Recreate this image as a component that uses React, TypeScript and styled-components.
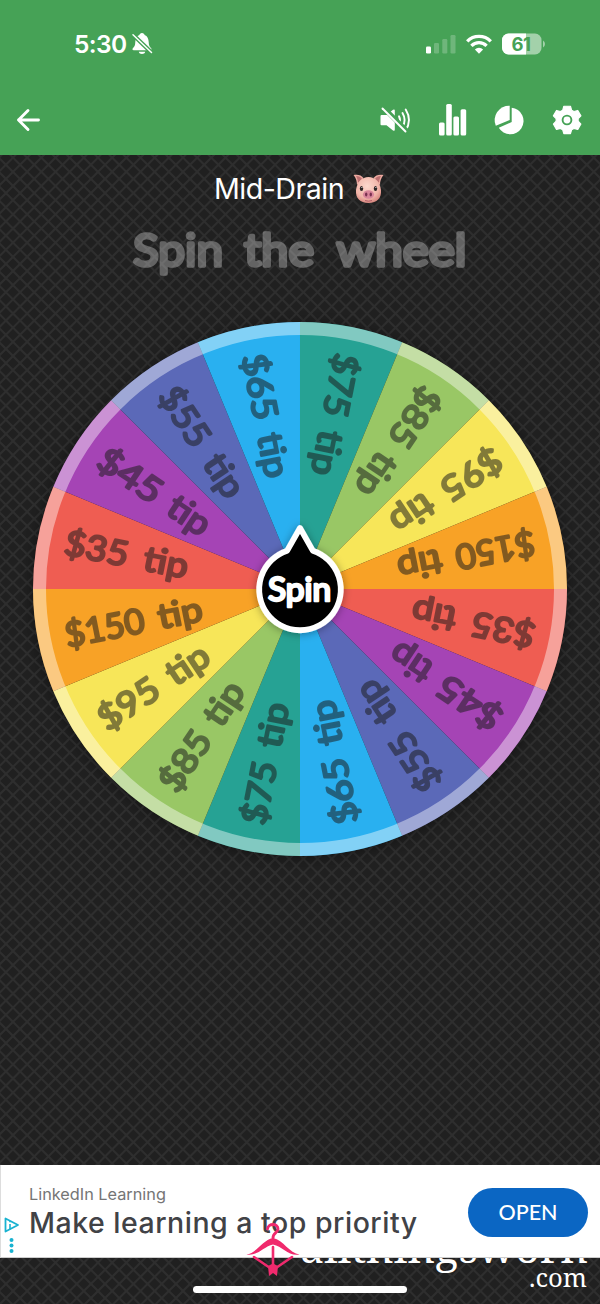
import React from "react";
import styled, { createGlobalStyle } from "styled-components";

const Global = createGlobalStyle`
  *{box-sizing:border-box}
  body{margin:0;background:#202020}
`;

const lattice = `url("data:image/svg+xml,%3Csvg xmlns='http://www.w3.org/2000/svg' width='85' height='85' viewBox='0 0 6 6'%3E%3Cpath d='M-1 0L6 7M-1 -1L7 7M0 -1L7 6M1 -1L7 5M2 -1L7 4M3 -1L7 3M4 -1L7 2M5 -1L7 1M-1 1L5 7M-1 2L4 7M-1 3L3 7M-1 4L2 7M-1 5L1 7M-1 1L1 -1M-1 2L2 -1M-1 3L3 -1M-1 4L4 -1M-1 5L5 -1M-1 6L6 -1M-1 7L7 -1M0 7L7 0M1 7L7 1M2 7L7 2M3 7L7 3M4 7L7 4M5 7L7 5' stroke='%232e2e2e' stroke-width='.14'/%3E%3C/svg%3E")`;

const Screen = styled.main`
  width: 600px;
  height: 1304px;
  display: flex;
  flex-direction: column;
  overflow: hidden;
  background: #202020 ${lattice} 12.5px 15.5px;
  background-size: 85px 85px;
  font-family: Inter, sans-serif;
`;
const Header = styled.header`
  height: 155px;
  flex: none;
  background: #46a256;
  color: #fff;
`;
const StatusBar = styled.div`
  height: 88px;
  padding: 0 55px 0 74px;
  display: flex;
  align-items: center;
  justify-content: space-between;
`;
const Cluster = styled.div<{ $gap: number }>`
  display: flex;
  align-items: center;
  gap: ${(p) => p.$gap}px;
`;
const Clock = styled.span`
  font-size: 24.5px;
  line-height: 30px;
  font-weight: 600;
  letter-spacing: -0.6px;
`;
const NavBar = styled.nav`
  height: 64px;
  padding: 0 18px 0 16px;
  display: flex;
  align-items: center;
  justify-content: space-between;
`;
const Glyph = styled.svg`
  display: block;
  flex: none;
  overflow: visible;
`;
const Game = styled.section`
  height: 1010px;
  flex: none;
  display: flex;
  flex-direction: column;
  align-items: center;
`;
const WheelName = styled.h1`
  margin: 16px 2px 0 0;
  height: 36px;
  display: flex;
  align-items: center;
  gap: 9px;
  color: #fff;
  font-size: 28.6px;
  line-height: 36px;
  font-weight: 400;
  letter-spacing: -0.5px;
`;
const Prompt = styled.svg`
  display: block;
  width: 600px;
  height: 74px;
  flex: none;
`;
const Wheel = styled.svg`
  display: block;
  width: 600px;
  height: 600px;
  margin-top: 7.5px;
  flex: none;
`;
const Ad = styled.aside`
  height: 93px;
  flex: none;
  background: #fff;
  border-left: 1px solid #ddd;
  border-bottom: 1px solid #ccc;
  padding: 0 12px 0 2px;
  display: flex;
  align-items: center;
`;
const AdMarks = styled.div`
  width: 26px;
  padding-top: 48px;
  align-self: flex-start;
`;
const AdCopy = styled.div`
  flex: 1;
  white-space: nowrap;
`;
const Sponsor = styled.div`
  font-size: 16.3px;
  line-height: 22px;
  color: #757575;
`;
const Headline = styled.div`
  margin-top: 1px;
  font-size: 28.5px;
  line-height: 34px;
  font-weight: 500;
  color: #414246;
  letter-spacing: 0.5px;
`;
const OpenButton = styled.button`
  width: 120px;
  height: 49px;
  border: 0;
  border-radius: 25px;
  background: #0b66c3;
  color: #fff;
  font: 500 21.5px/49px Lato, sans-serif;
  padding: 0;
  margin-top: 2px;
`;
const Footer = styled.footer`
  flex: 1;
  position: relative;
`;
const Watermark = styled.svg`
  position: absolute;
  left: 290px;
  top: 0;
  width: 310px;
  height: 46px;
  overflow: hidden;
`;
const HangerMark = styled.svg`
  position: absolute;
  left: 240px;
  top: -40px;
  width: 64px;
  height: 64px;
`;
const HomeIndicator = styled.div`
  width: 214px;
  height: 7px;
  border-radius: 4px;
  background: #fff;
  margin: 28px auto 0;
`;

const RED = "#ef5d52";
const PURPLE = "#a544b5";
const INDIGO = "#5b69b8";
const BLUE = "#29b0f0";
const TEAL = "#26a294";
const GREEN = "#99c765";
const YELLOW = "#f7e659";
const ORANGE = "#f8a226";

type Slice = { amount: string; color: string; amountEnd: number; tip: number; tipEnd: number };
const slices: Slice[] = [
  { amount: "$35", color: RED, amountEnd: -176, tip: -159, tipEnd: -115 },
  { amount: "$45", color: PURPLE, amountEnd: -170, tip: -155, tipEnd: -112 },
  { amount: "$55", color: INDIGO, amountEnd: -176, tip: -159, tipEnd: -115 },
  { amount: "$65", color: BLUE, amountEnd: -174, tip: -159, tipEnd: -115 },
  { amount: "$75", color: TEAL, amountEnd: -177, tip: -161, tipEnd: -117 },
  { amount: "$85", color: GREEN, amountEnd: -175, tip: -160, tipEnd: -116 },
  { amount: "$95", color: YELLOW, amountEnd: -174, tip: -158, tipEnd: -114 },
  { amount: "$150", color: ORANGE, amountEnd: -160, tip: -145, tipEnd: -101 },
];
const wheel = [...slices, ...slices];
const R = 267;
const x2 = -R * Math.cos(Math.PI / 8);
const y2 = -R * Math.sin(Math.PI / 8);

const Round = styled.text`
  font-family: Lato, sans-serif;
  font-weight: 400;
  stroke-linejoin: round;
  stroke-linecap: round;
`;

function Word({ x, y, width, children }: { x: number; y: number; width: number; children: string }) {
  return (
    <Round x={x} y={y} textLength={width} lengthAdjust="spacingAndGlyphs">{children}</Round>
  );
}

function Pig() {
  return (
    <Glyph width="31" height="30" viewBox="0 0 31 30">
      <defs>
        <radialGradient id="pig" cx=".45" cy=".35" r=".65">
          <stop offset="0" stopColor="#fcd9cd" />
          <stop offset=".7" stopColor="#f1b5a9" />
          <stop offset="1" stopColor="#d98a82" />
        </radialGradient>
      </defs>
      <path d="M.5 1c4-1 8 0 10 3L4 11C4 7 3 4 .5 1zM30.500 1c-4-1-8 0-10 3l6.500 7c0-4 1-7 3.500-10z" fill="#edaaa0" />
      <path d="M3 2c3 0 5 1 6 3L5 9C5 6 4 4 3 2zM28 2c-3 0-5 1-6 3l4 4c0-3 1-5 2-7z" fill="#ba6f70" />
      <path d="M15.500 3C22 3 27 8 28 16c.7 8-4 13-12.500 13S2.300 24 3 16C4 8 9 3 15.500 3z" fill="url(#pig)" />
      <ellipse cx="8.500" cy="14.500" rx="1.700" ry="2.600" fill="#2d2525" />
      <ellipse cx="22.500" cy="14.500" rx="1.700" ry="2.600" fill="#2d2525" />
      <circle cx="8.900" cy="13.500" r=".6" fill="#fff" />
      <circle cx="22.900" cy="13.500" r=".6" fill="#fff" />
      <ellipse cx="15.500" cy="20.500" rx="5.600" ry="4.300" fill="#d9859a" />
      <ellipse cx="13.200" cy="20.500" rx="1.200" ry="1.900" fill="#78304e" />
      <ellipse cx="17.800" cy="20.500" rx="1.200" ry="1.900" fill="#78304e" />
      <path d="M12 26.500q3.500 1.400 7 0" fill="none" stroke="#b45f68" />
    </Glyph>
  );
}

export default function App() {
  return (
    <Screen>
      <Global />
      <Header>
        <StatusBar>
          <Cluster $gap={5}>
            <Clock>5:30</Clock>
            <Glyph width="20" height="22" viewBox="0 0 20 22" fill="#fff">
              <path d="M10 0C8.500 0 7.600 1 7.400 2 4.500 3 3.500 6 3.300 9c-.1 3.500-.8 4.500-2.300 6-.8.8-.8 2.200.7 2.200h16.600c1.500 0 1.500-1.400.7-2.200-1.500-1.500-2.200-2.500-2.300-6C16.500 6 15.500 3 12.600 2 12.400 1 11.500 0 10 0z" />
              <path d="M6.800 18.800h6.400c-.4 3-6 3-6.400 0z" />
              <path d="M1 1.700l18.500 17.800" stroke="#46a256" strokeWidth="4.200" />
              <path d="M1 1.700l18.500 17.800" stroke="#fff" strokeWidth="1.500" strokeLinecap="round" />
            </Glyph>
          </Cluster>
          <Cluster $gap={10}>
            <Glyph width="30" height="20" viewBox="0 0 30 20" fill="#fff">
              <rect x="0" y="12.500" width="5" height="7" rx="1.300" />
              <g opacity=".22">
                <rect x="8" y="9" width="5" height="10.500" rx="1.300" />
                <rect x="16.300" y="5" width="5" height="14.500" rx="1.300" />
                <rect x="24.500" y="1" width="5" height="18.500" rx="1.300" />
              </g>
            </Glyph>
            <Glyph width="26" height="20" viewBox="0 0 26 20" fill="none" stroke="#fff" strokeWidth="3.300">
              <path d="M1.200 7.300a16.600 16.600 0 0 1 23.600 0M5.400 11.800a10.700 10.700 0 0 1 15.200 0" />
              <path d="M13 19.700l-4.100-4.200a5.800 5.800 0 0 1 8.200 0z" fill="#fff" stroke="none" />
            </Glyph>
            <Glyph width="43" height="22" viewBox="0 0 43 22">
              <clipPath id="battery"><rect width="39.500" height="21" y=".5" rx="6.500" /></clipPath>
              <g clipPath="url(#battery)">
                <rect width="40" height="22" fill="#a3d1aa" />
                <rect width="24" height="22" fill="#fff" />
              </g>
              <path d="M41 7.500q2 1 2 3.500t-2 3.500z" fill="#a3d1aa" />
              <text x="19" y="17.500" textAnchor="middle" fontFamily="Inter" fontWeight="700" fontSize="18.500" letterSpacing="-.5" fill="#46a256">61</text>
            </Glyph>
          </Cluster>
        </StatusBar>
        <NavBar>
          <Glyph width="24" height="24" viewBox="0 0 24 24" fill="none" stroke="#fff" strokeWidth="2.900" strokeLinecap="round" strokeLinejoin="round">
            <path d="M22.500 12H2.500M12 2.500L2.500 12l9.500 9.500" />
          </Glyph>
          <Cluster $gap={28}>
            <Glyph width="30" height="30" viewBox="0 0 30 30" fill="none" stroke="#fff" strokeLinecap="round">
              <path d="M1.500 10h5L13 4.800q1.800-1 1.800.8v19q0 2-1.800.8l-6.500-5.200h-5q-1 0-1-1v-8q0-1.200 1-1.200z" fill="#fff" stroke="none" />
              <path d="M19 11.300q2 3.700 0 7.400M22.500 8q4.200 7 0 14M25.700 4.500q6.500 10.500 0 21" strokeWidth="1.900" />
              <path d="M3.500 2.800l23 23" stroke="#46a256" strokeWidth="5" />
              <path d="M2.500 3.500l23 23" strokeWidth="1.900" />
            </Glyph>
            <Glyph width="28" height="32" viewBox="-1 0 28 32" fill="#fff">
              <rect x="0" y="18.500" width="5.600" height="13" rx="1.500" />
              <rect x="7.200" y="0" width="5.600" height="31.500" rx="1.500" />
              <rect x="14.400" y="12.500" width="5.600" height="19" rx="1.500" />
              <rect x="21.600" y="5.300" width="5.600" height="26.200" rx="1.500" />
            </Glyph>
            <Glyph width="30" height="30" viewBox="-.5 0 30 30" fill="#fff">
              <path d="M15.200 .7V15L1.300 20.800A14.400 14.400 0 0 1 15.200.7z" />
              <path d="M17.200 2.700A13.300 13.300 0 1 1 4.300 22.700L17.200 17z" />
            </Glyph>
            <Glyph width="30" height="30" viewBox="0 0 30 30">
              <path d="M11.500.6h7l1.200 4.100 2.400 1.400 4.100-1.100 3.300 5.700-2.900 3v2.600l2.900 3-3.300 5.700-4.100-1.100-2.400 1.400-1.200 4.100h-7l-1.200-4.100-2.400-1.400L3.800 25 .5 19.300l2.900-3v-2.600l-2.900-3L3.800 5l4.100 1.100 2.400-1.400z" fill="#fff" transform="translate(.9 .7) scale(.95)" stroke="#fff" strokeWidth="1.200" strokeLinejoin="round" />
              <circle cx="15" cy="15" r="4.400" fill="none" stroke="#46a256" strokeWidth="1.900" />
            </Glyph>
          </Cluster>
        </NavBar>
      </Header>
      <Game>
        <WheelName><span>Mid-Drain</span><Pig /></WheelName>
        <Prompt viewBox="0 207 600 74">
          <g fill="#fff" stroke="#fff" strokeWidth="3.500" fontSize="44" opacity=".3">
            <Word x={133} y={265.5} width={90}>Spin</Word>
            <Word x={244} y={265.5} width={70}>the</Word>
            <Word x={336.5} y={265.5} width={130}>wheel</Word>
          </g>
        </Prompt>
        <Wheel viewBox="-300 -300 600 600">
          <defs>
            <filter id="shade" x="-20%" y="-20%" width="140%" height="140%">
              <feDropShadow dx="0" dy="2" stdDeviation="8" floodColor="#000" floodOpacity=".45" />
            </filter>
            <filter id="hub" x="-30%" y="-30%" width="160%" height="160%">
              <feDropShadow dx="0" dy="1" stdDeviation="4" floodColor="#000" floodOpacity=".35" />
            </filter>
          </defs>
          <circle r="266" fill="#222" filter="url(#shade)" />
          {wheel.map((s, i) => (
            <path key={i} d={`M0 0L${-R} 0A${R} ${R} 0 0 1 ${x2} ${y2}Z`} fill={s.color} transform={`rotate(${i * 22.5})`} />
          ))}
          <circle r="260.500" fill="none" stroke="#fff" strokeWidth="13" opacity=".42" />
          {wheel.map((s, i) => (
            <g key={i} transform={`rotate(${i * 22.5 + 11.25})`} fontSize="34.500" fill="#1c1c1c" stroke="#1c1c1c" strokeWidth="2.400" opacity=".53">
              <Word x={-239.5} y={12} width={240.5 + s.amountEnd}>{s.amount}</Word>
              <Word x={s.tip} y={12} width={s.tipEnd - s.tip + 1}>tip</Word>
            </g>
          ))}
          <path d="M-12.800-38.300L0-61 12.800-38.300A40.800 40.800 0 1 1-12.800-38.300z" fill="#000" stroke="#fff" strokeWidth="5.800" strokeLinejoin="round" filter="url(#hub)" />
          <g fontSize="32" fill="#fff" stroke="#fff" strokeWidth="2.500">
            <Word x={-32} y={11.5} width={63}>Spin</Word>
          </g>
        </Wheel>
      </Game>
      <Ad>
        <AdMarks>
          <Glyph width="18" height="38" viewBox="0 0 18 38">
            <path d="M2.500 5.500v13L15 12z" fill="none" stroke="#19b2d0" strokeWidth="1.800" strokeLinejoin="round" />
            <path d="M7 11v5.500M7 8v1.200" stroke="#19b2d0" strokeWidth="1.600" />
            <g fill="#19b2d0"><circle cx="8.500" cy="27" r="2" /><circle cx="8.500" cy="32.500" r="2" /><circle cx="8.500" cy="38" r="2" /></g>
          </Glyph>
        </AdMarks>
        <AdCopy>
          <Sponsor>LinkedIn Learning</Sponsor>
          <Headline>Make learning a top priority</Headline>
        </AdCopy>
        <OpenButton>OPEN</OpenButton>
      </Ad>
      <Footer>
        <Watermark viewBox="290 1258 310 46">
          <g fill="#fff" fontFamily="'Noto Serif', 'DejaVu Serif', serif">
            <text x="300" y="1263" fontSize="41" textLength="288" lengthAdjust="spacingAndGlyphs">allthingsworn</text>
            <text x="529" y="1286.500" fontSize="25" textLength="58" lengthAdjust="spacingAndGlyphs">.com</text>
          </g>
        </Watermark>
        <HangerMark viewBox="240 1218 64 64">
          <g fill="none" stroke="#f02a6d" strokeLinecap="round">
            <path d="M267.500 1229c.5-6 10.500-6 10.500 0 0 4-5 3.500-5 9" strokeWidth="2.900" />
            <path d="M254 1257l19 13 19-13M273 1247v24" strokeWidth="2.600" />
            <path d="M246.500 1254.500c10-1 16-14.500 26.500-16.500 10.500 2 16.500 15.500 26.500 16.500-11 2-17-8-26.500-10-9.500 2-15.500 12-26.500 10z" fill="#f02a6d" stroke="none" />
            <path d="M273 1263.500l5 2.500-1 10-4-3-4 3-1-10z" fill="#f02a6d" stroke="none" />
          </g>
        </HangerMark>
        <HomeIndicator />
      </Footer>
    </Screen>
  );
}
